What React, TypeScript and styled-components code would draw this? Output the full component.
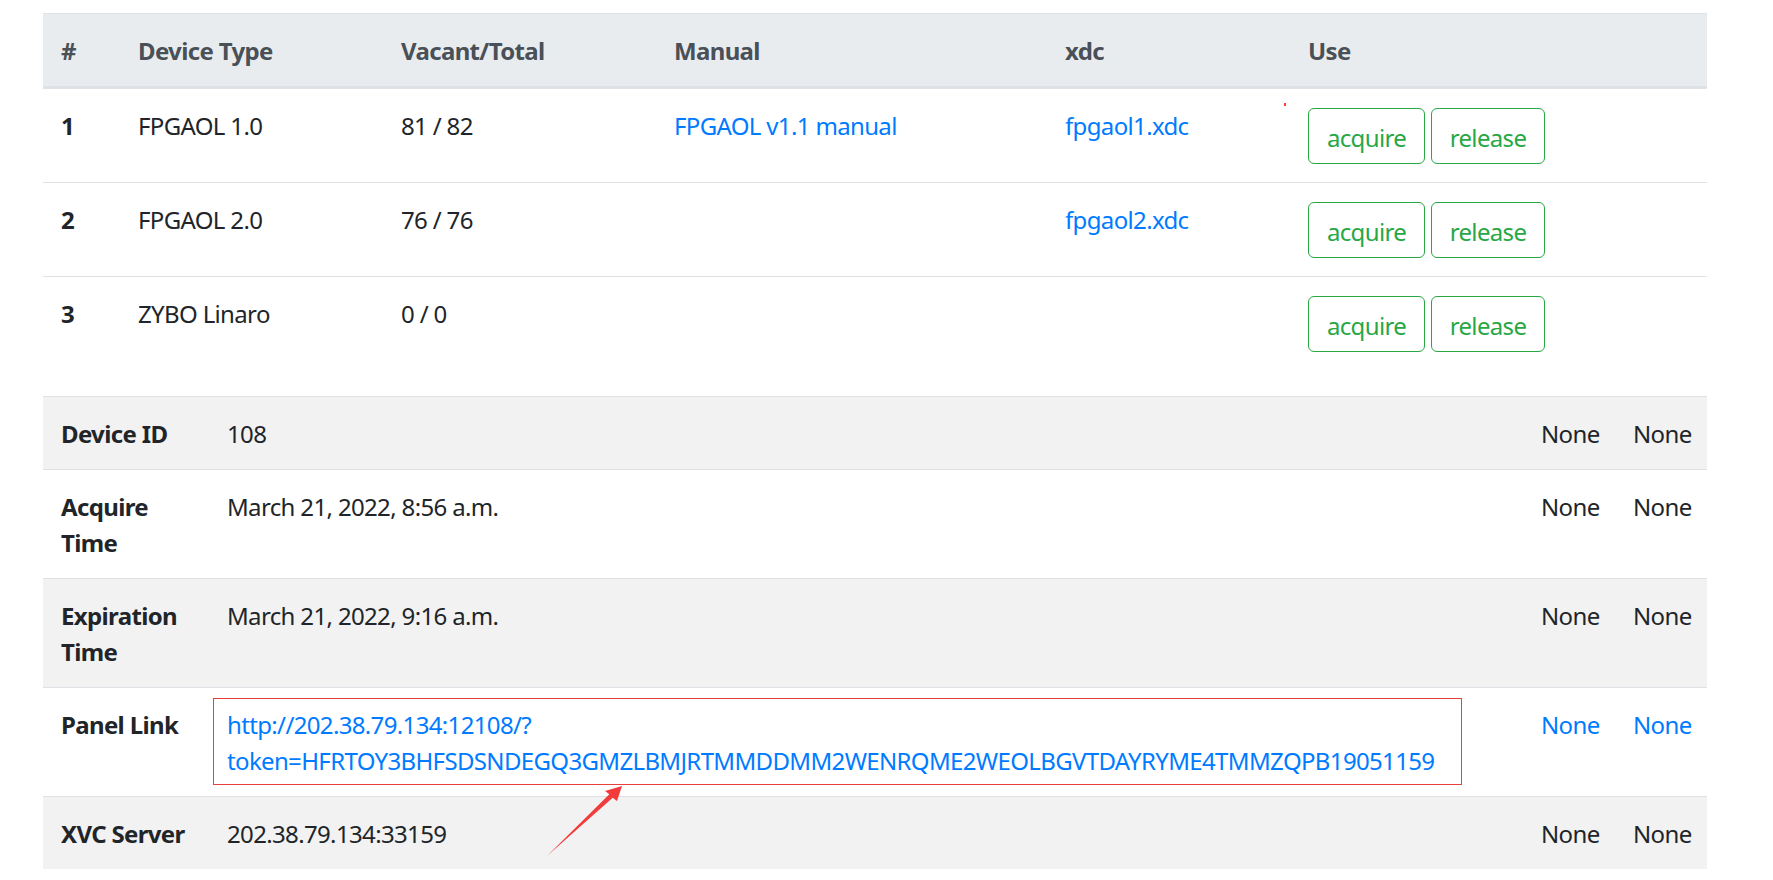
import React from "react";
import styled, { createGlobalStyle } from "styled-components";

const GlobalStyle = createGlobalStyle`
  html, body { margin: 0; padding: 0; background: #ffffff; }
  body {
    font-family: "Noto Sans", "Open Sans", "Noto Sans CJK SC", sans-serif;
    font-size: 24px;
    line-height: 36px;
    letter-spacing: -0.65px;
    color: #212529;
  }
`;

const Page = styled.div`
  position: relative;
  padding: 13px 0 0 43px;
  width: 1664px;
`;

const DeviceTable = styled.table`
  width: 1664px;
  border-collapse: collapse;
  table-layout: fixed;
  margin-bottom: 26px;
`;

const HeadCell = styled.th<{ $w: number }>`
  width: ${(p) => p.$w}px;
  box-sizing: border-box;
  text-align: left;
  padding: 19px 18px 17px;
  background: #e9ecef;
  color: #495057;
  font-weight: 700;
  border-top: 1px solid #dee2e6;
  border-bottom: 3px solid #dee2e6;
  vertical-align: bottom;
`;

const Cell = styled.td`
  padding: 19px 18px 17px;
  border-top: 1px solid #dee2e6;
  vertical-align: top;
  text-align: left;
`;

const IndexCell = styled(Cell)`
  font-weight: 700;
`;

const UseCell = styled(Cell)`
  padding: 18px;
`;

const Link = styled.a`
  color: #007bff;
  text-decoration: none;
`;

const ButtonGroup = styled.div`
  display: flex;
  gap: 6px;
  margin-top: 1px;
`;

const OutlineButton = styled.button<{ $w: number }>`
  width: ${(p) => p.$w}px;
  height: 56px;
  padding: 3px 0 0;
  box-sizing: border-box;
  display: inline-flex;
  align-items: center;
  justify-content: center;
  font-family: inherit;
  font-size: 24px;
  line-height: 36px;
  letter-spacing: inherit;
  color: #28a745;
  background: transparent;
  border: 1px solid #28a745;
  border-radius: 6px;
`;

const InfoTable = styled.table`
  width: 1664px;
  border-collapse: collapse;
  table-layout: fixed;
`;

const InfoRow = styled.tr`
  &:nth-of-type(odd) {
    background: #f2f2f2;
  }
`;

const Label = styled.th<{ $w?: number; $single?: boolean }>`
  ${(p) => (p.$w ? `width: ${p.$w}px;` : "")}
  ${(p) => (p.$single ? "white-space: nowrap;" : "")}
  box-sizing: border-box;
  padding: 19px 18px 17px;
  border-top: 1px solid #dee2e6;
  vertical-align: top;
  text-align: left;
  font-weight: 700;
  color: #212529;
`;

const Value = styled.td<{ $w?: number }>`
  ${(p) => (p.$w ? `width: ${p.$w}px;` : "")}
  box-sizing: border-box;
  position: relative;
  padding: 19px 18px 17px;
  border-top: 1px solid #dee2e6;
  vertical-align: top;
  text-align: left;
`;

const NoneCell = styled(Value)`
  white-space: nowrap;
`;

const Highlight = styled.span`
  position: absolute;
  left: 4px;
  top: 10px;
  width: 1249px;
  height: 87px;
  box-sizing: border-box;
  border: 1px solid #e8403c;
  pointer-events: none;
`;

const Arrow = styled.svg`
  position: absolute;
  left: 540px;
  top: 777px;
  width: 90px;
  height: 85px;
  pointer-events: none;
`;

const Speck = styled.span`
  position: absolute;
  left: 1284px;
  top: 103px;
  width: 2px;
  height: 3px;
  background: #ff4040;
`;

type Device = {
  id: number;
  type: string;
  vacant: string;
  manual?: string;
  xdc?: string;
};

const devices: Device[] = [
  { id: 1, type: "FPGAOL 1.0", vacant: "81 / 82", manual: "FPGAOL v1.1 manual", xdc: "fpgaol1.xdc" },
  { id: 2, type: "FPGAOL 2.0", vacant: "76 / 76", xdc: "fpgaol2.xdc" },
  { id: 3, type: "ZYBO Linaro", vacant: "0 / 0" },
];

export default function App() {
  return (
    <>
      <GlobalStyle />
      <Page>
        <DeviceTable>
          <thead>
            <tr>
              <HeadCell $w={77}>#</HeadCell>
              <HeadCell $w={263}>Device Type</HeadCell>
              <HeadCell $w={273}>Vacant/Total</HeadCell>
              <HeadCell $w={391}>Manual</HeadCell>
              <HeadCell $w={243}>xdc</HeadCell>
              <HeadCell $w={417}>Use</HeadCell>
            </tr>
          </thead>
          <tbody>
            {devices.map((d) => (
              <tr key={d.id}>
                <IndexCell>{d.id}</IndexCell>
                <Cell>{d.type}</Cell>
                <Cell>{d.vacant}</Cell>
                <Cell>{d.manual && <Link href="#">{d.manual}</Link>}</Cell>
                <Cell>{d.xdc && <Link href="#">{d.xdc}</Link>}</Cell>
                <UseCell>
                  <ButtonGroup>
                    <OutlineButton $w={117}>acquire</OutlineButton>
                    <OutlineButton $w={114}>release</OutlineButton>
                  </ButtonGroup>
                </UseCell>
              </tr>
            ))}
          </tbody>
        </DeviceTable>

        <InfoTable>
          <tbody>
            <InfoRow>
              <Label $w={166} $single>Device ID</Label>
              <Value $w={1314}>108</Value>
              <NoneCell $w={92}>None</NoneCell>
              <NoneCell $w={92}>None</NoneCell>
            </InfoRow>
            <InfoRow>
              <Label>Acquire Time</Label>
              <Value>March 21, 2022, 8:56 a.m.</Value>
              <NoneCell>None</NoneCell>
              <NoneCell>None</NoneCell>
            </InfoRow>
            <InfoRow>
              <Label>Expiration Time</Label>
              <Value>March 21, 2022, 9:16 a.m.</Value>
              <NoneCell>None</NoneCell>
              <NoneCell>None</NoneCell>
            </InfoRow>
            <InfoRow>
              <Label $single>Panel Link</Label>
              <Value>
                <Link href="#">
                  http://202.38.79.134:12108/?
                  <br />
                  token=HFRTOY3BHFSDSNDEGQ3GMZLBMJRTMMDDMM2WENRQME2WEOLBGVTDAYRYME4TMMZQPB19051159
                </Link>
                <Highlight />
              </Value>
              <NoneCell>
                <Link href="#">None</Link>
              </NoneCell>
              <NoneCell>
                <Link href="#">None</Link>
              </NoneCell>
            </InfoRow>
            <InfoRow>
              <Label $single>XVC Server</Label>
              <Value>202.38.79.134:33159</Value>
              <NoneCell>None</NoneCell>
              <NoneCell>None</NoneCell>
            </InfoRow>
          </tbody>
        </InfoTable>

        <Speck />
        <Arrow viewBox="0 0 90 85">
          <polygon
            points="82,9 65,14 69.3,17.2 7,79 72.7,20.8 77,24"
            fill="#f23b3b"
          />
        </Arrow>
      </Page>
    </>
  );
}
